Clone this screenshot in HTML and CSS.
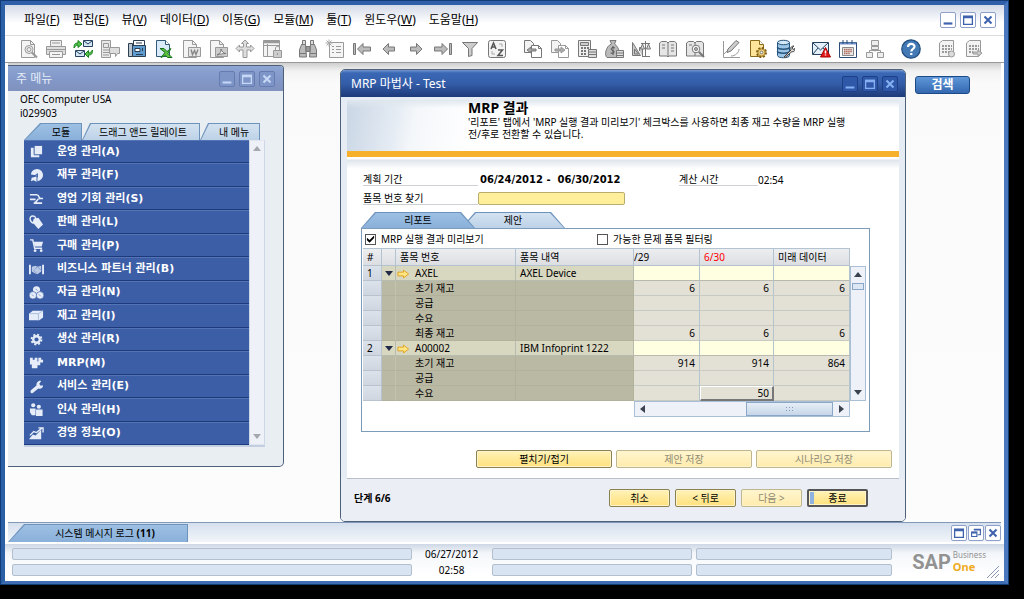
FILE: index.html
```html
<!DOCTYPE html>
<html lang="ko">
<head>
<meta charset="utf-8">
<title>SAP Business One</title>
<link rel="stylesheet" href="styles.css">
</head>
<body>
<svg class="defs" aria-hidden="true">
  <symbol id="w-min" viewBox="0 0 16 16"><path d="M3 12h10" stroke="currentColor" stroke-width="2.500"/></symbol>
  <symbol id="w-max" viewBox="0 0 16 16"><path d="M3 4h10v9H3z" fill="none" stroke="currentColor" stroke-width="1.500"/><path d="M2.300 4.500h11.400" stroke="currentColor" stroke-width="3"/></symbol>
  <symbol id="w-res" viewBox="0 0 16 16"><path d="M6 4h7v6h-3M3 7h6v5H3z" fill="none" stroke="currentColor" stroke-width="1.300"/><path d="M5.500 4h8M3 7.500h6" stroke="currentColor" stroke-width="2"/></symbol>
  <symbol id="w-cls" viewBox="0 0 16 16"><path d="M4 4l8 8M12 4l-8 8" stroke="currentColor" stroke-width="2.400"/></symbol>
  <symbol id="i-page" viewBox="0 0 20 20"><path d="M2.500 1.500h9l4 4v13h-13z" fill="#f4f4f4"/><path d="M11.500 1.500v4h4" fill="none"/></symbol>
  <symbol id="i-arrow" viewBox="0 0 14 10"><path d="M1 3h6V.800L12.500 5 7 9.200V7H1z" fill="#ffe680" stroke="#e0a020"/></symbol>
</svg>
<div class="app">
  <header class="menubar">
    <nav class="menus">
      <button>파일(<u>F</u>)</button><button>편집(<u>E</u>)</button><button>뷰(<u>V</u>)</button><button>데이터(<u>D</u>)</button><button>이동(<u>G</u>)</button><button>모듈(<u>M</u>)</button><button>툴(<u>T</u>)</button><button>윈도우(<u>W</u>)</button><button>도움말(<u>H</u>)</button>
    </nav>
    <div class="winbtns light">
      <button aria-label="최소화"><svg><use href="#w-min"/></svg></button>
      <button aria-label="최대화"><svg><use href="#w-max"/></svg></button>
      <button aria-label="닫기"><svg><use href="#w-cls"/></svg></button>
    </div>
  </header>

  <div class="toolbar">
    <div class="tools">
      <button aria-label="미리보기"><svg viewBox="0 0 20 20"><use href="#i-page"/><circle cx="10" cy="10.500" r="4" fill="#eee"/><circle cx="10" cy="10.500" r="2" /><path d="M13 13.500l5 5" stroke-width="2.200"/></svg></button>
      <button aria-label="인쇄"><svg viewBox="0 0 20 20"><path d="M4.500 7V1.500h11V7" fill="#eee"/><path d="M.500 7.500h19v8H.500z" fill="#ddd"/><path d="M.500 10.500h19M6 4h8" /><path d="M3.500 12.500h13v6h-13z" fill="#f3f3f3"/><path d="M6 15.500h8"/></svg></button>
      <button aria-label="이메일"><svg viewBox="0 0 20 20"><g stroke="#27435f"><path d="M10.500 1.500h9v6h-9zM2.500 11.500h9v6h-9z" fill="#d5e6f4"/><path d="M11 2l4 3 4-3M3 12l4 3 4-3" fill="none"/></g><g stroke="#14831c" fill="#55c04c"><path d="M1 9c0-4 1-5 4-5V1.500L9 5 5 8.500V6C3 6 2.500 7 1 9z"/><path d="M19.500 11c0 4-1 5-4 5v2.500L12 15l3.500-3.500V14c2 0 2.500-1 4-3z"/></g></svg></button>
      <button aria-label="SMS"><svg viewBox="0 0 20 20"><path d="M1.500 1.500h9v17h-9z" fill="#e8e8e8"/><path d="M3.500 4.500h5v4h-5zM3 11h6M3 13.500h6M3 16h6"/><path d="M9.500 8.500h10v6h-2l-2 3v-3h-6z" fill="#ddd"/></svg></button>
      <button aria-label="팩스"><svg viewBox="0 0 20 20"><g stroke="#2d3e50"><path d="M6.500 6V1.500h11V6" fill="#fff"/><path d="M1.500 4.500h4v13h-4z" fill="#b8c4ce"/><path d="M5.500 6.500h13v11h-13z" fill="#5e9cd0"/><path d="M8 9.500h5v3H8z" fill="#fff"/><path d="M9 15.500h7M15.500 9v3M9 4h6"/></g></svg></button>
      <button aria-label="엑셀"><svg viewBox="0 0 20 20"><g stroke="#315978"><path d="M2.500 1.500h9l4 4v12h-13z" fill="#d9ebf8"/><path d="M11.500 1.500v4h4" fill="#fff"/></g><path d="M6 9.500h4l3 3 4-3-3 5 4 4h-4.500l-2-2-4.500 2 4-5z" fill="#5cbf3c" stroke="#16731c"/></svg></button>
      <button aria-label="워드"><svg viewBox="0 0 20 20"><use href="#i-page"/><path d="M7.500 8.500h12v9h-12z" fill="#e5e5e5"/><path d="M10 10.500l1.500 5 2-4 1.500 4 2-5" fill="none" stroke="#888" stroke-width="1.400"/></svg></button>
      <button aria-label="PDF"><svg viewBox="0 0 20 20"><use href="#i-page"/><path d="M7.500 8.500h12v9h-12z" fill="#ccc"/><path d="M9 16c3-1 4.500-4 4-6 1 3 3 4.500 5 4.500-3 0-6 .500-9 1.500z" fill="#fff" stroke="#777"/></svg></button>
      <button aria-label="이동"><svg viewBox="0 0 20 20"><path d="M10 1l3.500 3.500h-2v3.500h4V6L19 9.500 15.500 13v-2H12v7.500H8V11H4.500v2L1 9.500 4.500 6v2h4V4.500h-2z" fill="#ddd"/></svg></button>
      <button aria-label="잠금"><svg viewBox="0 0 20 20"><path d="M1.500 1.500h16v16h-16z" fill="#f3f3f3"/><path d="M2 3h15" stroke-width="2.500"/><path d="M5.500 5v12M1.500 6.500h16"/><path d="M11.500 11.500h8v7h-8z" fill="#ccc"/><path d="M13.500 11V9c0-2 4-2 4 0v2M15.500 14v2" fill="none"/></svg></button>
    </div>
    <div class="tools">
      <button aria-label="찾기"><svg viewBox="0 0 20 20"><g stroke="#777"><path d="M4.500 1.500h3v4h-3zM12.500 1.500h3v4h-3z" fill="#ddd"/><path d="M3.500 5.500h4l1 12.500h-7V11zM12.500 5.500h4l2 5.500v7h-7z" fill="#bbb"/><path d="M8 7.500h4v5H8zM2 14.500h6M12 14.500h6" fill="#999"/></g></svg></button>
      <button aria-label="추가"><svg viewBox="0 0 20 20"><path d="M4.500 3.500h14v15h-14z" fill="#f5f5f5"/><path d="M7 7.500h2M11 7.500h5M7 10.500h2M11 10.500h5M7 13.500h2M11 13.500h5"/><path d="M4 .500v7M.500 4h7M1.500 1.500l5 5M6.500 1.500l-5 5" stroke="#aaa"/></svg></button>
      <button aria-label="처음"><svg viewBox="0 0 20 20" class="dk"><path d="M1.500 4.500h2v11h-2zM11 4.500v3.500h7.500v4H11v3.500L5.500 10z" fill="#bbb"/></svg></button>
      <button aria-label="이전"><svg viewBox="0 0 20 20" class="dk"><path d="M9.500 4.500v3.500h6v4h-6v3.500L4 10z" fill="#bbb"/></svg></button>
      <button aria-label="다음 레코드"><svg viewBox="0 0 20 20" class="dk"><path d="M10.500 4.500v3.500h-6v4h6v3.500L16 10z" fill="#bbb"/></svg></button>
      <button aria-label="마지막"><svg viewBox="0 0 20 20" class="dk"><path d="M16.500 4.500h2v11h-2zM9 4.500v3.500H1.500v4H9v3.500l5.500-5.500z" fill="#bbb"/></svg></button>
      <button aria-label="필터"><svg viewBox="0 0 20 20" class="dk"><path d="M2.500 3.500h15L12 9.500v7l-3.500 1v-8z" fill="#ccc"/></svg></button>
      <button aria-label="정렬"><svg viewBox="0 0 20 20" class="dk"><rect x="1.500" y="1.500" width="17" height="17" rx="2" fill="#f3f3f3"/><path d="M4 10l2.500-6L9 10M5 8h3M11 11h4.500L11 16.500h5" fill="none" stroke="#555" stroke-width="1.500"/><path d="M12 5h3v3M5 12v3h3" fill="none" stroke="#aaa"/></svg></button>
    </div>
    <div class="tools">
      <button aria-label="기본 문서"><svg viewBox="0 0 20 20" class="dk"><path d="M1.500 1.500h6l3 3v9h-9z" fill="#f3f3f3"/><path d="M8.500 6.500h7l3 3v9h-10z" fill="#fff"/><path d="M15.500 6.500v3h3"/><path d="M13 10v2H8v2l-4-3 4-3v2z" fill="#aaa"/></svg></button>
      <button aria-label="대상 문서"><svg viewBox="0 0 20 20"><path d="M1.500 1.500h6l3 3v9h-9z" fill="#f3f3f3"/><path d="M8.500 6.500h7l3 3v9h-10z" fill="#fff"/><path d="M15.500 6.500v3h3"/><path d="M5 10v2h6v2l4-3-4-3v2z" fill="#aaa"/></svg></button>
      <button aria-label="총이익"><svg viewBox="0 0 20 20" class="dk"><path d="M1.500 1.500h12v16h-12z" fill="#eee"/><path d="M3.500 3.500h8v3h-8z" fill="#ccc"/><path d="M4 9h2M7 9h2M10 9h2M4 12h2M7 12h2M4 15h2M7 15h2" stroke-width="2"/><path d="M11.500 10.500h8v8h-8zM11.500 13h8M11.500 15.500h8" fill="#ddd"/></svg></button>
      <button aria-label="지불 수단"><svg viewBox="0 0 20 20" class="dk"><path d="M6 1.500h6L10.500 5c5 3 6 12 4 13.500H3C0 16 2 7 7.500 5z" fill="#bbb"/><path d="M11 9c-4-2-5 2-2.500 2.500S11 15 6.500 14M9 7v9" fill="none" stroke="#555"/><path d="M12.500 11.500h7v7h-7zM12.500 14h7M12.500 16.500h7" fill="#ddd"/></svg></button>
      <button aria-label="거래"><svg viewBox="0 0 20 20" class="dk"><path d="M1.500 3.500l8 13h-8zM3.500 10l4 5h-4zM8.500 12V8.500h3v9" fill="#ccc"/><path d="M10 4.500h9M14.500 2v15M11 17.500h8" fill="none"/><path d="M11.500 5l-2 5h4zM17.500 5l-2 5h4z" fill="#ddd"/></svg></button>
      <button aria-label="분개"><svg viewBox="0 0 20 20" class="dk"><path d="M1.500 4l2-1.500h5L10 4l1.500-1.500h5l2 1.500v13h-7.500l-1 1-1-1H1.500z" fill="#e5e5e5"/><path d="M10 4v13M4 6h3M4 9h3M13 6h3M13 9h3M13 12h3"/></svg></button>
      <button aria-label="분개 미리보기"><svg viewBox="0 0 20 20" class="dk"><path d="M1.500 4l2-1.500h5L10 4l1.500-1.500h5l2 1.500v13h-17z" fill="#e5e5e5"/><path d="M10 4v13M4 6h3"/><circle cx="11" cy="10" r="3.800" fill="#f5f5f5"/><circle cx="11" cy="10" r="1.500" fill="#bbb"/><path d="M14 13l5 5" stroke-width="2"/></svg></button>
    </div>
    <div class="tools">
      <button aria-label="편집"><svg viewBox="0 0 20 20"><path d="M2.500 2v16.500H19M3 15l4-4M10 17c4 0 8-3 8-7" fill="none"/><path d="M7 10L15 1.500l3 2L10 12l-4 1.500z" fill="#ccc" stroke="#777"/></svg></button>
      <button aria-label="양식 설정"><svg viewBox="0 0 20 20"><path d="M2.500 1.500h9l4 4v12h-13z" fill="#ffe49a" stroke="#8a6a1c"/><path d="M11.500 1.500v4h4" fill="#fff" stroke="#8a6a1c"/><circle cx="13.500" cy="13.500" r="4.500" fill="#f0c14a" stroke="#7b5a14" stroke-width="2" stroke-dasharray="2 1.500"/><circle cx="13.500" cy="13.500" r="3.500" fill="#f3d27c" stroke="#a8893c"/><circle cx="13.500" cy="13.500" r="1.300" fill="#fff" stroke="#777"/></svg></button>
      <button aria-label="쿼리"><svg viewBox="0 0 20 20"><g stroke="#26557f" fill="#9cc4e4"><path d="M2.500 3.500v13c0 3 12 3 12 0v-13z"/><ellipse cx="8.500" cy="3.500" rx="6" ry="2.200" fill="#d5e8f6"/><path d="M2.500 8c0 3 12 3 12 0M2.500 12c0 3 12 3 12 0" fill="none" stroke-width="1.600"/></g><path d="M9 18l7-7c-1-3 1-4 3-4l-2 2 1 1.500 2-1c0 3-2 4-3 3l-7 6z" fill="#ddd" stroke="#444"/></svg></button>
    </div>
    <div class="tools">
      <button aria-label="메시지"><svg viewBox="0 0 20 20"><path d="M1.500 3.500h16v12h-16z" fill="#e4f0fa" stroke="#27435f"/><path d="M2 4l7.500 7L17 4M2 15l5-6M17 15l-5-6" fill="none" stroke="#27435f"/><path d="M14.500 8.500l5 9.500h-10z" fill="#e01818" stroke="#a80000"/><path d="M14.500 11.500v3M14.500 15.500v1" stroke="#fff" stroke-width="1.500"/></svg></button>
      <button aria-label="달력"><svg viewBox="0 0 20 20"><path d="M1.500 3.500h17v15h-17z" fill="#fff" stroke="#2c4c78"/><path d="M2 4.500h16" stroke="#6f93c8" stroke-width="2"/><path d="M5 1v4M9 1v4M14 1v4" stroke="#2c4c78"/><path d="M4.500 8.500h11v8h-11z" fill="#e8e8e8" stroke="#888"/><path d="M6 10.500h8M6 12.500h8M6 14.500h6" stroke="#b06a58" stroke-width="1.400" stroke-dasharray="1.500 .600"/></svg></button>
      <button aria-label="조직"><svg viewBox="0 0 20 20"><path d="M6.500 1.500h7v5h-7zM1.500 13.500h6v5h-6zM12.500 13.500h6v5h-6zM6.500 7.500h7v3h-7z" fill="#eee"/><path d="M10 10.500v2M4.500 13v-1.500h11V13" fill="none"/></svg></button>
    </div>
    <div class="tools">
      <button aria-label="도움말"><svg viewBox="0 0 20 20"><circle cx="10" cy="10" r="9.200" fill="#4379b4" stroke="#234f80" stroke-width="1.300"/><path d="M7 8c0-4 6.500-4 6.500-.500 0 2.500-3.200 2.300-3.200 5M10.300 14v2" fill="none" stroke="#fff" stroke-width="2.200"/></svg></button>
    </div>
    <div class="tools">
      <button aria-label="목록 설정"><svg viewBox="0 0 20 20"><path d="M2.500 4l3-2.500h11v14l-2 2h-12z" fill="#f3f3f3"/><path d="M5 7h10M5 10h10M5 13h8" stroke-width="1.800" stroke-dasharray="2 1"/><circle cx="14.500" cy="15" r="3" fill="#ddd"/></svg></button>
      <button aria-label="목록 이동"><svg viewBox="0 0 20 20"><path d="M2.500 4l3-2.500h11v14l-2 2h-12z" fill="#f3f3f3"/><path d="M5 7h10M5 10h10M5 13h4" stroke-width="1.800" stroke-dasharray="2 1"/><path d="M9 13h5v-2l4 3-4 3.500V15H9z" fill="#ccc"/></svg></button>
    </div>
  </div>

  <main class="desk">
    <section class="win mainmenu">
      <div class="titlebar">
        <h2>주 메뉴</h2>
        <div class="winbtns">
          <button aria-label="최소화"><svg><use href="#w-min"/></svg></button>
          <button aria-label="최대화"><svg><use href="#w-max"/></svg></button>
          <button aria-label="닫기"><svg><use href="#w-cls"/></svg></button>
        </div>
      </div>
      <div class="company"><p>OEC Computer USA</p><p>i029903</p></div>
      <div class="tabs">
        <button class="tab on"><span>모듈</span></button><button class="tab wide"><span>드래그 앤드 릴레이트</span></button><button class="tab mine"><span>내 메뉴</span></button>
      </div>
      <div class="modules">
        <ul>
          <li><a href="#"><svg viewBox="0 0 16 16"><path d="M2 4h9v10H2z"/><path d="M5.500 1.500h9v10h-9z" stroke="#3b5ea6" /></svg>운영 관리(A)</a></li>
          <li><a href="#"><svg viewBox="0 0 16 16"><path d="M2 7a6.500 6.500 0 1 1 7 7V8z"/><path d="M8 9v6l-3-2-3 1 1-4z"/><path d="M4 10l5-4v4" fill="none" stroke="#3b5ea6"/></svg>재무 관리(F)</a></li>
          <li><a href="#"><svg viewBox="0 0 16 16"><path d="M1 4h7c4 0 1 4 5 4h2M1 9h6M5 13h9M12 8c-5 0-2 4-6 4" fill="none" stroke="#e6edf8" stroke-width="1.800"/></svg>영업 기회 관리(S)</a></li>
          <li><a href="#"><svg viewBox="0 0 16 16"><path d="M5 4l5-1 5 7-5 5-6-7z"/><path d="M5 9C0 7 0 1 4 1s3 4 3 5" fill="none" stroke="#e6edf8" stroke-width="1.500"/></svg>판매 관리(L)</a></li>
          <li><a href="#"><svg viewBox="0 0 16 16"><path d="M1 2h3l2 9h8" fill="none" stroke="#e6edf8" stroke-width="1.500"/><path d="M5 4h10l-1.500 5H6z"/><circle cx="6.500" cy="13.500" r="1.500"/><circle cx="13" cy="13.500" r="1.500"/></svg>구매 관리(P)</a></li>
          <li><a href="#"><svg viewBox="0 0 16 16"><path d="M0 3h2v10H0zM14 3h2v10h-2z"/><path d="M3 5l4-1 2 1 4-1v6l-4 3-3-1-3-2z" opacity=".75"/><path d="M6 8l3-3 4 4M5 9l3 3" fill="none" stroke="#7f98cc"/></svg>비즈니스 파트너 관리(B)</a></li>
          <li><a href="#"><svg viewBox="0 0 16 16"><circle cx="8" cy="5" r="3.800"/><g stroke="#3b5ea6" stroke-width=".700"><circle cx="4.200" cy="11" r="4"/><circle cx="11.800" cy="11" r="4"/></g><path d="M3 10l2 2M10.500 10l2 2M7 4l2 2" stroke="#7f98cc"/></svg>자금 관리(N)</a></li>
          <li><a href="#"><svg viewBox="0 0 16 16"><path d="M0 6l4-3h11v7l-4 3H0z"/><path d="M0 6h10l5-3M10 6v7" stroke="#a9bbdf" fill="none"/></svg>재고 관리(I)</a></li>
          <li><a href="#"><svg viewBox="0 0 16 16"><circle cx="8" cy="8" r="3.500" fill="none" stroke="#e6edf8" stroke-width="2.500"/><circle cx="8" cy="8" r="5.300" fill="none" stroke="#e6edf8" stroke-width="2" stroke-dasharray="2.200 1.960"/></svg>생산 관리(R)</a></li>
          <li><a href="#"><svg viewBox="0 0 16 16"><path d="M1 3h3v2h2V3h3v4h1V3h3v2h2v3h-3v3H9v3H3v-4H1z"/></svg>MRP(M)</a></li>
          <li><a href="#"><svg viewBox="0 0 16 16"><path d="M2 12l6-5c-.500-3 2-6 5-5l-2 3 1 2h3c0 3-3 4-5 3l-6 5c-2 1-3-1-2-3z"/></svg>서비스 관리(E)</a></li>
          <li><a href="#"><svg viewBox="0 0 16 16"><circle cx="4.500" cy="3.500" r="2.200"/><circle cx="10.500" cy="5" r="2.200"/><path d="M1 7h6v7H3L1 11zM7.500 8h7v7h-7z"/></svg>인사 관리(H)</a></li>
          <li><a href="#"><svg viewBox="0 0 16 16"><path d="M0 14l4-5 3 1 6-6v10z"/><path d="M1 10l4-4 3 1 6-5M10 2h5v5" fill="none" stroke="#e6edf8" stroke-width="1.500"/></svg>경영 정보(O)</a></li>
        </ul>
        <div class="vscroll pale"><i class="up"></i><i class="down"></i></div>
      </div>
    </section>

    <section class="win mrp">
      <div class="titlebar">
        <h2>MRP 마법사 - Test</h2>
        <div class="winbtns">
          <button aria-label="최소화"><svg><use href="#w-min"/></svg></button>
          <button aria-label="최대화"><svg><use href="#w-max"/></svg></button>
          <button aria-label="닫기"><svg><use href="#w-cls"/></svg></button>
        </div>
      </div>
      <div class="content">
        <div class="banner">
          <h1>MRP 결과</h1>
          <p>'리포트' 탭에서 'MRP 실행 결과 미리보기' 체크박스를 사용하면 최종 재고 수량을 MRP 실행<br>전/후로 전환할 수 있습니다.</p>
        </div>
        <div class="form">
          <div class="line"><span class="lbl">계획 기간</span><b>06/24/2012 -&nbsp; 06/30/2012</b><span class="lbl time">계산 시간</span><span class="val">02:54</span></div>
          <div class="line"><label class="lbl" for="find">품목 번호 찾기</label><input type="text" id="find"></div>
        </div>
        <div class="tabs big">
          <button class="tab on"><span>리포트</span></button><button class="tab two"><span>제안</span></button>
        </div>
        <div class="panel">
          <div class="checks">
            <label><input type="checkbox" checked>MRP 실행 결과 미리보기</label>
            <label><input type="checkbox">가능한 문제 품목 필터링</label>
          </div>
          <div class="grid">
            <table>
              <colgroup><col class="c1"><col class="c2"><col class="c3"><col class="c4"><col class="c5"><col class="c6"><col class="c7"></colgroup>
              <thead><tr><th>#</th><th></th><th>품목 번호</th><th>품목 내역</th><th class="cut">/29</th><th class="red">6/30</th><th>미래 데이터</th></tr></thead>
              <tbody>
                <tr class="item"><td>1</td><td><i class="tri"></i></td><td><svg><use href="#i-arrow"/></svg>AXEL</td><td>AXEL Device</td><td></td><td></td><td></td></tr>
                <tr><td></td><td></td><td>초기 재고</td><td></td><td>6</td><td>6</td><td>6</td></tr>
                <tr><td></td><td></td><td>공급</td><td></td><td></td><td></td><td></td></tr>
                <tr><td></td><td></td><td>수요</td><td></td><td></td><td></td><td></td></tr>
                <tr><td></td><td></td><td>최종 재고</td><td></td><td>6</td><td>6</td><td>6</td></tr>
                <tr class="item"><td>2</td><td><i class="tri"></i></td><td><svg><use href="#i-arrow"/></svg>A00002</td><td>IBM Infoprint 1222</td><td></td><td></td><td></td></tr>
                <tr><td></td><td></td><td>초기 재고</td><td></td><td>914</td><td>914</td><td>864</td></tr>
                <tr><td></td><td></td><td>공급</td><td></td><td></td><td></td><td></td></tr>
                <tr><td></td><td></td><td>수요</td><td></td><td></td><td class="raised">50</td><td></td></tr>
              </tbody>
            </table>
            <div class="vscroll"><i class="up"></i><b></b><i class="down"></i></div>
            <div class="hscroll"><i class="left"></i><b></b><i class="right"></i></div>
          </div>
        </div>
        <div class="acts"><button class="btn">펼치기/접기</button><button class="btn" disabled>제안 저장</button><button class="btn" disabled>시나리오 저장</button></div>
      </div>
      <footer class="wizard">
        <strong>단계 6/6</strong>
        <button class="btn">취소</button><button class="btn">&lt; 뒤로</button><button class="btn" disabled>다음 &gt;</button><button class="btn default">종료</button>
      </footer>
    </section>

    <button class="search">검색</button>
  </main>

  <div class="msgbar">
    <button class="tab on"><span>시스템 메시지 로그 <b>(11)</b></span></button>
    <div class="winbtns light">
      <button aria-label="최대화"><svg><use href="#w-max"/></svg></button>
      <button aria-label="복원"><svg><use href="#w-res"/></svg></button>
      <button aria-label="닫기"><svg><use href="#w-cls"/></svg></button>
    </div>
  </div>
  <footer class="status">
    <div class="fields">
      <span class="f"></span><time>06/27/2012</time><span class="f"></span><span class="f"></span>
      <span class="f"></span><time>02:58</time><span class="f"></span><span class="f"></span>
    </div>
    <div class="logo"><strong>SAP</strong><div><span>Business</span><b>One</b></div></div>
    <svg class="grip" viewBox="0 0 14 14"><path d="M1 13L13 1M5 13l8-8M9 13l4-4" stroke="#8a97b0"/></svg>
  </footer>
</div>
</body>
</html>
```
FILE: styles.css
```css
* { box-sizing: border-box; }
body { margin: 0; background: #000; font: 10px/12px "Noto Sans", "Noto Sans CJK KR", sans-serif; color: #000; }
h1, h2, p, ul { margin: 0; padding: 0; list-style: none; }
button, input { font: inherit; color: inherit; margin: 0; }
button { padding: 0; border: 0; background: none; white-space: nowrap; }
a { color: inherit; text-decoration: none; }
svg { display: block; }
.defs { display: none; }

.app { display: flex; flex-direction: column; height: calc(100vh - 14px); margin-right: 15px; background: #fff; border: 5px solid #4470b5; border-width: 5px 5px 4px; border-color: #2f5fa8 #4a77bd #3e6db4 #2c60a6; outline: 1px solid #123c78; outline-offset: -1px; }

.menubar { display: flex; justify-content: space-between; align-items: center; height: 31px; padding: 0 8px 0 19px; background: linear-gradient(#d3dae8, #fff 60%); border-bottom: 1px solid #dcdcdc; }
.menus { display: flex; gap: 13px; font-size: 12px; line-height: 16px; }

.winbtns { display: flex; gap: 4px; color: #86b0f2; }
.winbtns button { width: 16px; height: 16px; border: 1px solid #1d3f86; border-radius: 2px; background: #2f58a8; }
.winbtns svg { width: 14px; height: 14px; }
.winbtns.light { color: #3f62ad; }
.winbtns.light button { border-color: #8e9fca; background: #fff; }

.toolbar { display: flex; align-items: center; gap: 16px; height: 27px; padding-left: 14px; background: #fff; border-bottom: 1px solid #999; flex: none; }
.tools { display: flex; gap: 7px; }
.tools svg { width: 20px; height: 20px; stroke: #999; fill: none; }
.tools svg.dk { stroke: #777; }

.desk { position: relative; flex: 1; min-height: 0; overflow: hidden; margin: 0 3px; background: linear-gradient(#cfcfcf, #f2f2f2 8px, #fafafa 20px, #fcfcfc); }
.win { position: absolute; display: flex; flex-direction: column; border: 1px solid #4d6178; border-radius: 5px; overflow: hidden; }
.titlebar { display: flex; justify-content: space-between; align-items: center; height: 27px; padding: 0 7px 0 10px; background: linear-gradient(#7295cc, #3a68b5 3px, #345da9 50%, #1d3a79); color: #fff; }
.titlebar h2 { font-size: 12px; line-height: 16px; font-weight: 400; }

.mainmenu { left: 0; top: 2px; width: 276px; border-left: 0; border-radius: 0 4px 5px 0; background: #e9eef3; }
.mainmenu .titlebar { height: 25px; padding: 0 8px; background: linear-gradient(#8ea6d4, #8399c9 50%, #8091bd); color: #e3ebf8; }
.mainmenu .winbtns button { background: #7e95c8; border-color: #667bb0; }
.mainmenu .winbtns { color: #c5d8f6; }
.company { padding: 1px 12px 0; line-height: 14px; }

.tabs { display: flex; padding-left: 16px; margin-top: 3px; }
.tab { --cut: 8px; position: relative; height: 17px; background: #6d93bd; clip-path: polygon(var(--cut) 0, 100% 0, 100% 100%, 0 100%); }
.tab::before { content: ""; position: absolute; inset: 1px 1px 0 1px; background: linear-gradient(#d3e2f0, #bdd2e8); clip-path: polygon(var(--cut) 0, 100% 0, 100% 100%, 0 100%); }
.tab.on { --cut: 16px; width: 58px; padding-left: 16px; }
.tab.on::before { background: linear-gradient(#9dc0e3, #8ab0da); }
.tab span { position: relative; }
.tab.wide { width: 118px; padding-left: 4px; }
.tab.mine { width: 60px; padding-left: 8px; }
.modules { display: flex; margin: 0 18px 19px 16px; border-bottom: 2px solid #c3cfe0; }
.modules ul { flex: 1; display: grid; grid-auto-rows: 1fr; min-height: 305px; background: #3b5ea6; }
.modules li { border-top: 1px solid #5574b5; border-bottom: 1px solid #1c3a7c; }
.modules a { display: flex; align-items: center; gap: 13px; height: 100%; padding-left: 5px; color: #fff; font: bold 11px/16px "DejaVu Sans", "Noto Sans CJK KR", sans-serif; }
.modules svg { width: 15px; height: 15px; fill: #e6edf8; }

.vscroll { display: flex; flex-direction: column; justify-content: space-between; align-items: center; width: 16px; padding: 5px 0; border: 1px solid #a9bfd6; background: #eef2f8; }
.vscroll.pale { border-color: #dfe6ef #cdd7e6; }
.vscroll.pale .up { border-bottom-color: #a4a9b0; }
.vscroll.pale .down { border-top-color: #a4a9b0; }
.up, .down, .left, .right { width: 0; height: 0; border: 4px solid transparent; }
.up { border-top: 0; border-bottom: 5px solid #3c4350; }
.down { border-bottom: 0; border-top: 5px solid #3c4350; }
.left { border-left: 0; border-right: 5px solid #3c4350; }
.right { border-right: 0; border-left: 5px solid #3c4350; }

.mrp { left: 332px; top: 6px; width: 566px; background: #e6ecf4; }
.content { margin: 3px 6px 0; background: #fff; border-bottom: 1px solid #b9bec8; }
.banner { height: 57px; padding: 0 0 0 121px; border-bottom: 6px solid #f6b02c; background: linear-gradient(#dfe7ee, transparent 8px), linear-gradient(100deg, #c9d6e5, #e4ebf3 50px, #f4f7fa 70px, #fff 130px); }
.banner h1 { font-size: 14px; line-height: 16px; }
.form { padding: 13px 16px 0; background: linear-gradient(#fff 2px, #dfe5eb 3px, #fff 12px); }
.line { display: flex; align-items: center; height: 19px; }
.lbl { width: 115px; height: 13px; border-bottom: 1px solid #cdd0d5; }
.line b { width: 201px; padding-left: 2px; font: bold 10px/12px "DejaVu Sans", sans-serif; }
.lbl.time { width: 79px; }
#find { width: 147px; height: 13px; padding: 0 3px; border: 1px solid #b8ad6c; border-radius: 2px; background: #ffef9b; }

.tabs.big { padding-left: 14px; margin-top: 4px; }
.big .tab { height: 16px; width: 114px; padding: 0; clip-path: polygon(14px 0, calc(100% - 14px) 0, 100% 100%, 0 100%); }
.big .tab::before { clip-path: polygon(14px 0, calc(100% - 14px) 0, 100% 100%, 0 100%); }
.big .tab.on { z-index: 1; }
.big .two { width: 104px; margin-left: -14px; }
.panel { margin: 0 29px 0 14px; padding: 1px 3px 14px 1px; border: 1px solid #7d9cba; }
.checks { display: flex; align-items: center; height: 18px; padding-left: 2px; }
.checks label { display: flex; align-items: center; gap: 5px; width: 232px; }
.checks input { appearance: none; width: 11px; height: 11px; border: 1px solid #555; background: #fff; }
.checks input:checked::before { content: ""; display: block; width: 9px; height: 9px; background: #000; clip-path: polygon(10% 35%, 40% 62%, 90% 10%, 90% 38%, 40% 92%, 10% 65%); }
.grid { display: grid; grid-template-columns: 1fr 16px; }
table { width: 100%; table-layout: fixed; border-collapse: separate; border-spacing: 0; }
.c1 { width: 19px; } .c2 { width: 14px; } .c3 { width: 120px; } .c4 { width: 118px; } .c5 { width: 66px; } .c6 { width: 74px; }
th, td { height: 15px; padding: 0 4px; border-right: 1px solid #b4c4cc; border-bottom: 1px solid #c6cac2; line-height: 12px; overflow: hidden; white-space: nowrap; }
th { height: 18px; background: linear-gradient(#eceef0, #dcdee2); border: 1px solid #b4c3d2; border-left: 0; text-align: left; font-weight: 400; }
th.red { color: #f00; }
th.cut { padding-left: 0; }
td:nth-child(1) { background: linear-gradient(#dbe2ea, #cfd6e0); border-color: #b9c3cf; }
td:nth-child(2), td:nth-child(3), td:nth-child(4) { background: #bab9a3; border-color: #b2b29c; }
td:nth-child(2) { padding: 0; border-right-color: #c4c3ae; }
td:nth-child(3) { padding-left: 19px; }
td:nth-child(n+5) { background: #e3e0d6; text-align: right; }
.item td:nth-child(2), .item td:nth-child(3), .item td:nth-child(4) { background: #d8d7c0; border-color: #b6bcb0; }
.item td:nth-child(n+5) { background: #ffffe1; border-bottom-color: #b8bab0; }
.item td:nth-child(3) { padding-left: 1px; }
td svg { display: inline-block; width: 13px; height: 10px; margin-right: 5px; vertical-align: -2px; }
.tri { display: block; margin: auto; width: 8px; border: 4px solid transparent; border-top: 5px solid #222a45; border-bottom: 0; }
td.raised { border-right: 2px solid #777; border-bottom: 2px solid #777; border-left: 1px solid #fff; border-top: 1px solid #fff; padding-right: 3px; }
.grid .vscroll { margin-top: 18px; justify-content: flex-start; gap: 6px; }
.grid .vscroll b { width: 12px; height: 7px; border: 1px solid #8aa6c8; background: #dce7f3; }
.grid .vscroll .down { margin-top: auto; }
.hscroll { display: flex; align-items: center; justify-content: space-between; height: 16px; margin-left: 271px; padding: 0 5px; border: 1px solid #a9bfd6; background: #eef2f8; }
.hscroll .left { margin-right: auto; }
.hscroll b { width: 87px; height: 14px; margin-right: 6px; padding: 3px 38px; border: 1px solid #8aa6c8; background: radial-gradient(#8499b8 1px, transparent 1px) 0 0 / 3px 3px content-box, linear-gradient(#e6eef7, #c6d6e8); }

.btn { height: 18px; border: 1px solid #8c8250; border-radius: 2px; background: linear-gradient(#fff3b8, #ffe07c); box-shadow: inset 0 0 0 1px #fff3cc; }
.btn:disabled { border-color: #bdb68e; color: #8f8a74; background: linear-gradient(#fff6d0, #ffebab); }
.acts { display: flex; justify-content: flex-end; gap: 4px; margin-top: 18px; padding: 0 7px 10px; }
.acts .btn { width: 136px; }
.wizard { display: flex; align-items: center; gap: 5px; height: 42px; padding: 0 37px 4px 13px; background: #ebeef4; }
.wizard strong { flex: 1; }
.wizard .btn { width: 61px; }
.wizard .default { border: 2px solid #565656; background: linear-gradient(#8fb2e0, #8fb2e0) 0 0 / 5px 100% no-repeat, linear-gradient(#fff3b8, #ffe07c); }

.search { position: absolute; right: 31px; top: 13px; width: 55px; height: 18px; border: 1px solid #1c4a86; border-radius: 3px; background: linear-gradient(#5f97d8, #3468b0); color: #fff; font-size: 12px; line-height: 14px; font-weight: 700; }

.msgbar { display: flex; justify-content: space-between; align-items: flex-end; height: 20px; margin: 0 3px; border-top: 1px solid #8298b8; background: linear-gradient(#d5e0ee, #f2f5f9); flex: none; }
.msgbar .tab { height: 18px; width: 180px; padding: 0 0 0 14px; }
.msgbar .winbtns { gap: 1px; align-self: center; }
.status { display: flex; align-items: center; height: 39px; padding: 0 4px 2px 7px; background: linear-gradient(#cdd7e5, #f3f6fa 9px, #fff 30px); border-top: 2px solid #fff; flex: none; }
.fields { flex: 1; display: grid; grid-template-columns: 400fr 72fr 201fr 196fr; gap: 4px; margin-right: 20px; text-align: center; }
.f { height: 12px; border: 1px solid #b3bfcf; border-radius: 2px; background: #d9e4f2; }
.logo { display: flex; align-items: center; color: #929292; }
.logo strong { font: bold 20px/22px Roboto, sans-serif; }
.logo div { display: flex; flex-direction: column; margin-left: 2px; }
.logo span { font-size: 8px; line-height: 11px; }
.logo b { font-size: 11px; line-height: 14px; color: #f0ab1e; }
.grip { width: 14px; height: 14px; align-self: flex-end; }
```
